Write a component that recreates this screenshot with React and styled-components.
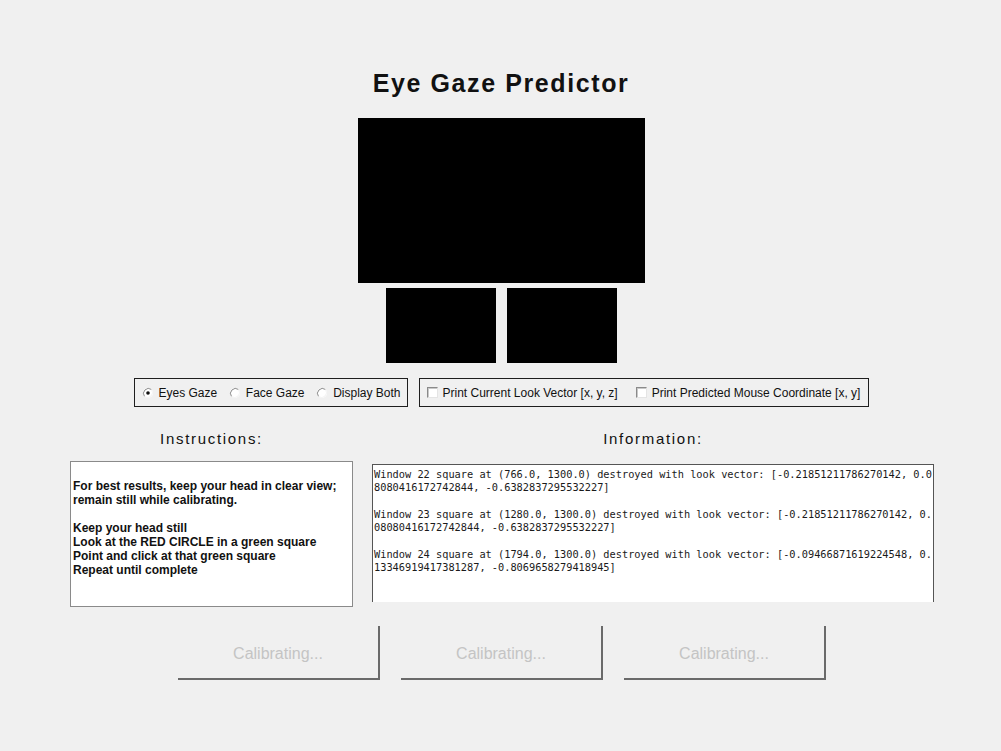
import React from "react";
import styled, { createGlobalStyle } from "styled-components";

const Global = createGlobalStyle`
  html, body { margin: 0; padding: 0; background: #f0f0f0; }
  body { font-family: "Liberation Sans", Arial, sans-serif; }
`;

const Page = styled.div`
  width: 1001px;
  height: 751px;
  background: #f0f0f0;
  display: flex;
  flex-direction: column;
  align-items: center;
  padding: 68px 0 0 1px;
  box-sizing: border-box;
  overflow: hidden;
`;

const Title = styled.h1`
  margin: 0;
  height: 30px;
  line-height: 30px;
  font-family: "Liberation Sans", Arial, sans-serif;
  font-size: 25px;
  font-weight: bold;
  letter-spacing: 1.6px;
  color: #111;
`;

const Feed = styled.div`
  background: #000;
  width: ${(p) => p.$w}px;
  height: ${(p) => p.$h}px;
`;

const MainFeed = styled(Feed)`
  margin-top: 20px;
`;

const EyeRow = styled.div`
  margin-top: 5px;
  display: flex;
  gap: 11px;
`;

const OptionsRow = styled.div`
  margin-top: 15px;
  display: flex;
  gap: 11px;
`;

const Group = styled.div`
  box-sizing: border-box;
  width: ${(p) => p.$w}px;
  height: 29px;
  border: 1px solid #1e1e1e;
  display: flex;
  align-items: center;
  gap: ${(p) => p.$gap}px;
  padding: 0 6px 0 7px;
  justify-content: ${(p) => p.$justify || "flex-start"};
`;

const Option = styled.label`
  display: flex;
  align-items: center;
  gap: ${(p) => p.$gap}px;
  font-family: "Liberation Sans", Arial, sans-serif;
  font-size: 12px;
  color: #111;
  white-space: nowrap;
`;

const CheckBox = styled.span`
  display: inline-block;
  box-sizing: border-box;
  width: 11px;
  height: 11px;
  background: #fff;
  border-top: 1px solid #8a8a8a;
  border-left: 1px solid #8a8a8a;
  border-right: 1px solid #e4e4e4;
  border-bottom: 1px solid #e4e4e4;
  box-shadow: inset 1px 1px 0 #c8c8c8;
`;

const Radio = ({ checked }) => (
  <svg width="12" height="12" viewBox="0 0 12 12">
    <circle cx="6" cy="6" r="5" fill="#fff" />
    <path d="M9.5 2.5 A5 5 0 0 0 2.5 9.5" fill="none" stroke="#8c8c8c" strokeWidth="1" />
    <path d="M2.5 9.5 A5 5 0 0 0 9.5 2.5" fill="none" stroke="#f4f4f4" strokeWidth="1" />
    {checked && <circle cx="6" cy="6" r="1.8" fill="#111" />}
  </svg>
);

const PanelsRow = styled.div`
  margin-top: 22px;
  display: flex;
  gap: 19px;
  align-items: flex-start;
  padding-left: 2px;
`;

const Column = styled.div`
  display: flex;
  flex-direction: column;
  align-items: center;
  width: ${(p) => p.$w}px;
`;

const Heading = styled.div`
  height: 20px;
  line-height: 20px;
  font-family: "Liberation Sans", Arial, sans-serif;
  font-size: 15px;
  letter-spacing: 1.7px;
  color: #111;
`;

const InstructionBox = styled.div`
  box-sizing: border-box;
  margin-top: 12px;
  width: 100%;
  height: 146px;
  background: #fff;
  border: 1px solid #8a8a8a;
  padding: 17px 0 0 2px;
  font-family: "Liberation Sans", Arial, sans-serif;
  font-size: 12px;
  font-weight: bold;
  line-height: 14px;
  color: #111;
  white-space: pre;
`;

const InfoBox = styled.div`
  box-sizing: border-box;
  margin-top: 15px;
  width: 100%;
  height: 138px;
  background: #fff;
  border: 1px solid #555;
  border-bottom: none;
  padding: 3px 0 0 1px;
  font-family: "DejaVu Sans Mono", "Liberation Mono", monospace;
  font-size: 10.3px;
  line-height: 13.3px;
  color: #1a1a1a;
  white-space: pre;
  overflow: hidden;
`;

const ButtonRow = styled.div`
  margin-top: 19px;
  display: flex;
  gap: 21px;
  padding-left: 2px;
`;

const CalButton = styled.button`
  box-sizing: border-box;
  width: 202px;
  height: 54px;
  background: #f0f0f0;
  border: none;
  border-right: 2px solid #6a6a6a;
  border-bottom: 2px solid #6a6a6a;
  font-family: "Liberation Sans", Arial, sans-serif;
  font-size: 16px;
  color: #c4c4c4;
  padding: 4px 0 0 0;
`;

const instructions = `For best results, keep your head in clear view;
remain still while calibrating.

Keep your head still
Look at the RED CIRCLE in a green square
Point and click at that green square
Repeat until complete`;

const info = `Window 22 square at (766.0, 1300.0) destroyed with look vector: [-0.21851211786270142, 0.0
8080416172742844, -0.6382837295532227]

Window 23 square at (1280.0, 1300.0) destroyed with look vector: [-0.21851211786270142, 0.
08080416172742844, -0.6382837295532227]

Window 24 square at (1794.0, 1300.0) destroyed with look vector: [-0.09466871619224548, 0.
13346919417381287, -0.8069658279418945]`;

export default function App() {
  return (
    <>
      <Global />
      <Page>
        <Title>Eye Gaze Predictor</Title>
        <MainFeed $w={287} $h={165} />
        <EyeRow>
          <Feed $w={110} $h={75} />
          <Feed $w={110} $h={75} />
        </EyeRow>
        <OptionsRow>
          <Group $w={274} $justify="space-between">
            <Option $gap={5}>
              <Radio checked />
              Eyes Gaze
            </Option>
            <Option $gap={5}>
              <Radio />
              Face Gaze
            </Option>
            <Option $gap={5}>
              <Radio />
              Display Both
            </Option>
          </Group>
          <Group $w={450} $gap={18}>
            <Option $gap={5}>
              <CheckBox />
              Print Current Look Vector [x, y, z]
            </Option>
            <Option $gap={5}>
              <CheckBox />
              Print Predicted Mouse Coordinate [x, y]
            </Option>
          </Group>
        </OptionsRow>
        <PanelsRow>
          <Column $w={283}>
            <Heading>Instructions:</Heading>
            <InstructionBox>{instructions}</InstructionBox>
          </Column>
          <Column $w={562}>
            <Heading>Information:</Heading>
            <InfoBox>{info}</InfoBox>
          </Column>
        </PanelsRow>
        <ButtonRow>
          <CalButton disabled>Calibrating...</CalButton>
          <CalButton disabled>Calibrating...</CalButton>
          <CalButton disabled>Calibrating...</CalButton>
        </ButtonRow>
      </Page>
    </>
  );
}
